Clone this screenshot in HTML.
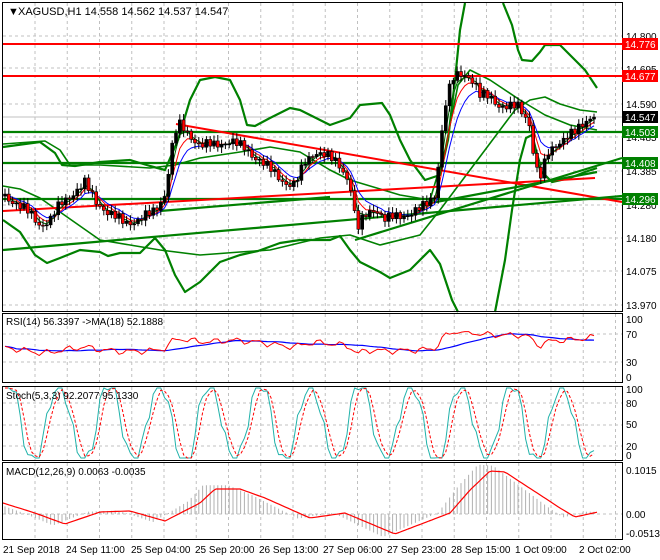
<!DOCTYPE html>
<html><head><meta charset="utf-8"><style>
html,body{margin:0;padding:0;background:#fff;}
svg{display:block;font-family:"Liberation Sans",sans-serif;}
</style></head><body>
<svg id="c" width="660" height="560" xmlns="http://www.w3.org/2000/svg">
<rect width="660" height="560" fill="#fff"/>
<g id="grid" stroke="#c0c0c0" stroke-dasharray="3,3" stroke-width="1"></g>
<g id="main"></g>
<g fill="none" stroke="#000" stroke-width="1">
<rect x="2.5" y="2.5" width="620" height="309"/>
<rect x="2.5" y="313.5" width="620" height="69"/>
<rect x="2.5" y="386.5" width="620" height="74"/>
<rect x="2.5" y="462.5" width="620" height="77"/>
</g>
<g font-size="10" fill="#000">
<text x="8" y="15" font-size="11">▼</text>
<text x="18" y="15" font-size="11">XAGUSD,H1  14.558 14.562 14.537 14.547</text>
<text x="626" y="40">14.800</text>
<text x="626" y="73">14.695</text>
<text x="626" y="108">14.590</text>
<text x="626" y="141">14.485</text>
<text x="626" y="175">14.385</text>
<text x="626" y="209">14.280</text>
<text x="626" y="242">14.180</text>
<text x="626" y="275">14.075</text>
<text x="626" y="309">13.970</text>
<text x="6" y="325">RSI(14) 56.3397  -&gt;MA(18) 52.1888</text>
<text x="626" y="323">100</text><text x="626" y="338">70</text><text x="626" y="366">30</text><text x="626" y="381">0</text>
<text x="6" y="399">Stoch(5,3,3) 92.2077 95.1330</text>
<text x="626" y="393">100</text><text x="626" y="407">80</text><text x="626" y="428">50</text><text x="626" y="450">20</text><text x="626" y="459">0</text>
<text x="6" y="475">MACD(12,26,9) 0.0063 -0.0035</text>
<text x="626" y="474">0.1015</text><text x="626" y="518">0.00</text><text x="626" y="537">-0.0513</text>
<text x="3" y="553">21 Sep 2018</text>
<text x="66" y="553">24 Sep 11:00</text>
<text x="131" y="553">25 Sep 04:00</text>
<text x="195" y="553">25 Sep 20:00</text>
<text x="259" y="553">26 Sep 13:00</text>
<text x="323" y="553">27 Sep 06:00</text>
<text x="387" y="553">27 Sep 23:00</text>
<text x="451" y="553">28 Sep 15:00</text>
<text x="515" y="553">1 Oct 09:00</text>
<text x="579" y="553">2 Oct 02:00</text>
</g>
<g id="labels" font-size="10" fill="#fff">
<rect x="622" y="38" width="36" height="12" fill="#f00"/><text x="625" y="48">14.776</text>
<rect x="622" y="70" width="36" height="12" fill="#f00"/><text x="625" y="80">14.677</text>
<rect x="622" y="111" width="36" height="12" fill="#000"/><text x="625" y="121">14.547</text>
<rect x="622" y="126" width="36" height="12" fill="#008000"/><text x="625" y="136">14.503</text>
<rect x="622" y="157" width="36" height="12" fill="#008000"/><text x="625" y="167">14.408</text>
<rect x="622" y="193" width="36" height="12" fill="#008000"/><text x="625" y="203">14.296</text>
</g>
</svg>
<script>
(function(){
var NS="http://www.w3.org/2000/svg";
function el(p,t,a){var e=document.createElementNS(NS,t);for(var k in a)e.setAttribute(k,a[k]);p.appendChild(e);return e;}
var g=document.getElementById('grid'),m=document.getElementById('main');
for(var x=35;x<620;x+=32.25){
 [[3,311],[314,382],[387,460],[463,539]].forEach(function(r){el(g,'line',{x1:x,y1:r[0],x2:x,y2:r[1]});});
}
[36,68,104,137,171,205,238,271,305].forEach(function(y){el(g,'line',{x1:3,y1:y,x2:622,y2:y});});
[334,362].forEach(function(y){el(g,'line',{x1:3,y1:y,x2:622,y2:y});});
[403,425,446].forEach(function(y){el(g,'line',{x1:3,y1:y,x2:622,y2:y});});
el(g,'line',{x1:3,y1:514,x2:622,y2:514});
function pl(pts,st,w,extra){var a={points:pts.map(function(p){return p.join(',');}).join(' '),fill:'none',stroke:st,'stroke-width':w,'stroke-linejoin':'round'};for(var k in extra)a[k]=extra[k];return el(m,'polyline',a);}
el(m,'line',{x1:3,y1:117,x2:622,y2:117,stroke:'#c0c0c0'});
var G='#008000';
pl([[3,147],[40,142],[55,153],[62,165],[75,166],[100,162],[130,160],[150,166],[165,170],[178,140],[190,100],[200,80],[215,77],[230,80],[240,100],[247,125],[255,126],[270,118],[290,108],[300,110],[320,120],[330,125],[350,118],[360,105],[382,103],[390,115],[400,140],[410,160],[425,180],[440,175],[448,140],[455,80],[460,30],[465,3]],G,2.2);
pl([[503,3],[512,25],[518,50],[522,60],[532,61],[540,52],[545,45],[560,45],[570,55],[585,70],[597,88]],G,2.2);
pl([[3,220],[20,232],[35,255],[47,263],[60,258],[80,250],[100,252],[108,256],[120,253],[140,253],[155,238],[165,250],[175,275],[185,292],[200,282],[220,262],[240,255],[258,251],[280,243],[300,240],[330,240],[340,236],[350,250],[360,262],[380,272],[390,278],[410,270],[430,250],[440,264],[452,300],[458,312]],G,2.2);
pl([[495,312],[505,260],[512,210],[520,160],[526,138],[532,135],[540,170],[552,182],[570,178],[585,172],[597,168]],G,2.2);
pl([[3,186],[20,189],[40,198],[60,212],[100,240],[130,245],[160,250],[200,255],[240,252],[270,250],[320,238],[350,235],[380,245],[420,235],[440,210],[470,170],[500,130],[515,110],[530,100],[545,97],[560,104],[580,110],[597,112]],G,1.6);
pl([[3,144],[45,141],[60,150],[70,165],[100,165],[150,168],[175,165],[200,158],[240,152],[270,147],[300,152],[330,170],[350,180],[400,195],[430,200],[445,150],[458,85],[470,70],[490,80],[520,100],[545,115],[570,125],[597,130]],G,1.6);
el(m,'line',{x1:3,y1:44,x2:622,y2:44,stroke:'#f00','stroke-width':2});
el(m,'line',{x1:3,y1:76,x2:622,y2:76,stroke:'#f00','stroke-width':2});
el(m,'line',{x1:3,y1:132,x2:622,y2:132,stroke:G,'stroke-width':2.2});
el(m,'line',{x1:3,y1:163,x2:622,y2:163,stroke:G,'stroke-width':2.2});
el(m,'line',{x1:3,y1:199,x2:622,y2:199,stroke:G,'stroke-width':2.2});
el(m,'line',{x1:176,y1:124,x2:622,y2:202,stroke:'#f00','stroke-width':2});
el(m,'line',{x1:3,y1:211,x2:595,y2:178,stroke:'#f00','stroke-width':2});
el(m,'line',{x1:3,y1:250,x2:622,y2:196,stroke:G,'stroke-width':2.2});
el(m,'line',{x1:355,y1:240,x2:622,y2:158,stroke:G,'stroke-width':2.2});
el(m,'line',{x1:420,y1:205,x2:597,y2:172,stroke:G,'stroke-width':2.2});
el(m,'line',{x1:160,y1:211,x2:330,y2:197,stroke:G,'stroke-width':2.2});
var K=[[3,190],[15,200],[30,215],[40,228],[50,225],[60,210],[75,195],[85,185],[95,200],[110,210],[125,218],[140,215],[155,210],[165,195],[172,150],[178,128],[190,140],[200,150],[215,148],[230,140],[245,145],[260,155],[270,165],[285,180],[295,185],[305,165],[315,155],[325,160],[340,170],[350,185],[357,232],[365,215],[375,205],[385,215],[395,212],[405,210],[415,208],[425,205],[435,195],[440,150],[445,110],[452,85],[460,78],[468,80],[475,88],[480,100],[490,98],[500,105],[510,105],[518,102],[525,110],[530,120],[535,160],[540,175],[548,150],[555,142],[565,138],[575,135],[585,125],[596,118]];
function P(x){for(var i=1;i<K.length;i++){if(x<=K[i][0]){var a=K[i-1],b=K[i];return a[1]+(b[1]-a[1])*(x-a[0])/(b[0]-a[0]);}}return K[K.length-1][1];}
function N(x){return 5*Math.sin(x*1.7)+3.5*Math.sin(x*0.93+1)+2.5*Math.sin(x*3.1);}
var closes=[],xs=[];
for(var i=0;;i++){var x=5+3.8*i;if(x>597)break;xs.push(x);closes.push(P(x)+N(x));}
var ema=function(n){var k=2/(n+1),v=closes[0],o=[];closes.forEach(function(c,i){v=c*k+v*(1-k);o.push([xs[i],v.toFixed(1)]);});return o;};
pl(ema(8),'#00f',1);pl(ema(5),'#f00',1);pl(ema(3),'#006400',1);
for(var i=0;i<xs.length;i++){
 var x=xs[i],c=closes[i],o=i?closes[i-1]:c+2;
 var top=Math.min(o,c),bot=Math.max(o,c);if(bot-top<1)bot=top+1;
 var h=top-2-Math.abs(4*Math.sin(x*2.3)),l=bot+2+Math.abs(4*Math.cos(x*1.9));
 el(m,'line',{x1:x,y1:h,x2:x,y2:l,stroke:'#000'});
 el(m,'rect',{x:x-1.5,y:top,width:3,height:bot-top,fill:c>o?'#f00':'#000',stroke:'#000','stroke-width':0.6});
}
var rr=[],rb=[];
for(var i=0;i<xs.length;i++){var x=xs[i];var v=50+(200-P(x))*0.25+4*Math.sin(x*0.3)+2*Math.sin(x*1.1);v=Math.max(20,Math.min(80,v));rr.push([x,(378-v*0.58).toFixed(1)]);}
var q=[];rr.forEach(function(p,i){q.push(+p[1]);if(q.length>18)q.shift();var a=q.reduce(function(a,b){return a+b;},0)/q.length;rb.push([p[0],a.toFixed(1)]);});
pl(rb,'#00f',1.2);pl(rr,'#f00',1);
var st=[],sd=[];
for(var i=0;i<xs.length;i++){var x=xs[i];var v=50+60*Math.sin(x*0.125+0.5)+12*Math.sin(x*0.45);v=Math.max(0,Math.min(100,v));st.push([x,(458-v*0.7).toFixed(1)]);}
for(var i=0;i<st.length;i++){var a=st.slice(Math.max(0,i-2),i+1);sd.push([st[i][0],(a.reduce(function(s,p){return s+ +p[1];},0)/a.length).toFixed(1)]);}
pl(st,'#20b2aa',1);pl(sd,'#f00',1,{'stroke-dasharray':'3,2'});
var MS=[[3,503],[35,513],[65,524],[100,512],[130,511],[165,521],[200,503],[215,489],[240,489],[265,498],[310,518],[345,513],[395,534],[450,513],[470,490],[490,471],[505,472],[560,508],[575,517],[598,512]];
function M(x){for(var i=1;i<MS.length;i++){if(x<=MS[i][0]){var a=MS[i-1],b=MS[i];return a[1]+(b[1]-a[1])*(x-a[0])/(b[0]-a[0]);}}return 512;}
for(var i=0;i<xs.length;i++){var x=xs[i];var y=M(x+12);el(m,'line',{x1:x,y1:514,x2:x,y2:y-(514-y)*0.15,stroke:'#b0b0b0'});}
var mp=[];for(var x=3;x<=598;x+=3)mp.push([x,M(x).toFixed(1)]);pl(mp,'#f00',1.2);
})();
</script>
</body></html>
